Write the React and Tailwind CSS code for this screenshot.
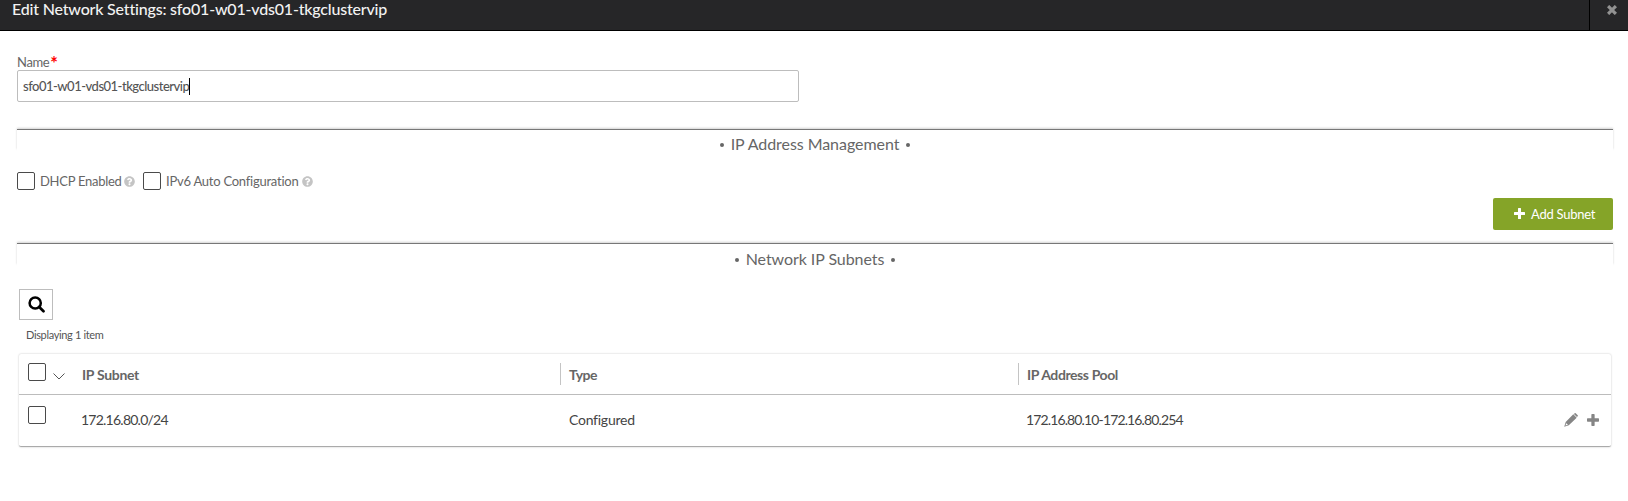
import { FaQuestionCircle } from "react-icons/fa";

function Checkbox({ className = "" }) {
  return <span className={"block size-[18px] shrink-0 rounded-[2px] border border-[#4a4a4a] bg-white " + className} />;
}

function Help({ className = "" }) {
  return <FaQuestionCircle className={"size-[11px] shrink-0 text-[#c4c4c4] " + className} />;
}

function Plus({ className = "" }) {
  return (
    <svg viewBox="0 0 11 11" className={"shrink-0 fill-current " + className}>
      <path d="M4.6 0h1.8a.6.6 0 0 1 .6.6V4h3.4a.6.6 0 0 1 .6.6v1.8a.6.6 0 0 1-.6.6H7v3.4a.6.6 0 0 1-.6.6H4.6a.6.6 0 0 1-.6-.6V7H.6a.6.6 0 0 1-.6-.6V4.6A.6.6 0 0 1 .6 4H4V.6a.6.6 0 0 1 .6-.6z" />
    </svg>
  );
}

function Pencil() {
  return (
    <svg viewBox="0 0 14 14" className="size-[14px] shrink-0 fill-[#858585]">
      <path fillRule="evenodd" d="M9.9 1 10.7.3q.5-.5 1 0l2 2q.5.5 0 1l-.8.8zM9.3 1.3l3.4 3.4-7.9 7.6L.2 13.8l1.5-4.9zM2.3 10.2l-.9 2.4 2.5-.8z" />
    </svg>
  );
}

function SearchIcon() {
  return (
    <svg viewBox="0 0 17 17" className="size-[17px] fill-none stroke-black">
      <circle cx="7.2" cy="7" r="5.6" strokeWidth="2.5" />
      <path d="m11.2 11 4.3 4.3" strokeWidth="2.7" strokeLinecap="round" />
    </svg>
  );
}

function SectionHeading({ children, className = "", textClassName = "" }) {
  return (
    <div className={"border-t border-[#777] shadow-[0_-1px_2px_rgba(0,0,0,0.18)] " + className}>
      <div className={"flex items-center justify-center gap-[7px] bg-white text-[16px] text-[#666] " + textClassName}>
        <span className="mt-[2px] size-[4px] rounded-full bg-[#666]" />
        <span className="tracking-[-0.06px]">{children}</span>
        <span className="mt-[2px] size-[4px] rounded-full bg-[#666]" />
      </div>
    </div>
  );
}

export default function App() {
  return (
    <div className="h-[501px] overflow-hidden bg-white font-['Lato',sans-serif] whitespace-nowrap text-[#666]">
      <header className="flex h-[31px] border-b border-black bg-[#262628]">
        <h1 className="flex-1 pl-[12px] text-[16px] leading-[18px] font-medium tracking-[-0.19px] text-[#f2f2f2]">
          Edit Network Settings: sfo01-w01-vds01-tkgclustervip
        </h1>
        <button className="flex w-[39px] justify-center border-l border-black pt-[5px] pl-[5px]">
          <svg viewBox="0 0 10 10" className="size-[10px] stroke-[#929292]">
            <path d="m2.2 2.2 5.6 5.6M7.8 2.2 2.2 7.8" strokeWidth="3.2" strokeLinecap="square" />
          </svg>
        </button>
      </header>

      <main className="pr-[15px] pl-[17px]">
        <label className="flex h-[39px] items-start pt-[22px] text-[13px] leading-[18px] tracking-[-0.35px]">
          Name
          <span className="ml-[1px] text-[18px] leading-[20px] font-bold text-[#f00]">*</span>
        </label>
        <div className="flex h-[32px] w-[782px] items-center rounded-[2px] border border-[#bdbdbd] pt-px pl-[5px] text-[13px] font-medium tracking-[-0.5px] text-[#555]">
          sfo01-w01-vds01-tkgclustervip
          <span className="-mt-px h-[17px] w-px bg-black" />
        </div>

        <SectionHeading className="mt-[27px] h-[21px]" textClassName="h-[27px]">IP Address Management</SectionHeading>

        <div className="mt-[22px] flex h-[18px] items-center text-[13px] leading-[18px]">
          <Checkbox />
          <span className="ml-[5px] w-[81px] tracking-[-0.27px]">DHCP Enabled</span>
          <Help className="ml-[3px]" />
          <Checkbox className="ml-[8px]" />
          <span className="ml-[5px] w-[134px] tracking-[-0.24px]">IPv6 Auto Configuration</span>
          <Help className="ml-[2px]" />
        </div>

        <div className="mt-[8px] flex justify-end">
          <button className="flex h-[32px] w-[120px] items-center rounded-[2px] bg-[#85a428] pt-px pl-[21px] text-[13px] tracking-[-0.25px] text-white">
            <Plus className="-mt-[3px] mr-[6px] size-[11px]" />
            Add Subnet
          </button>
        </div>

        <SectionHeading className="mt-[13px] h-[22px]" textClassName="h-[29px]">Network IP Subnets</SectionHeading>

        <div className="mt-[24px] pr-[2px] pl-[2px]">
          <button className="flex h-[31px] w-[34px] items-center justify-center border border-[#bdbdbd]">
            <SearchIcon />
          </button>
          <p className="mt-[6px] pl-[7px] text-[11px] leading-[17px] tracking-[-0.35px] text-[#555]">Displaying 1 item</p>

          <div className="mt-[11px] h-[93px] rounded-[2px] border-b border-[#aaa] shadow-[0_0_2px_rgba(0,0,0,0.25)]">
            <div className="grid h-[41px] grid-cols-[541px_458px_1fr] items-center border-b border-[#bcbcbc] text-[14px] font-bold">
              <div className="flex items-center pl-[9px]">
                <Checkbox className="-mt-[4px]" />
                <svg viewBox="0 0 12 7" className="mt-[4px] ml-[7px] h-[7px] w-[12px] fill-none stroke-[#555]">
                  <path d="m.5.5 5.5 5.5 5.5-5.5" />
                </svg>
                <span className="ml-[17px] tracking-[-0.3px]">IP Subnet</span>
              </div>
              <div className="flex h-[22px] items-center border-l border-[#c4c4c4] pl-[8px] tracking-[-0.5px]">Type</div>
              <div className="flex h-[22px] items-center border-l border-[#c4c4c4] pl-[8px] tracking-[-0.4px]">IP Address Pool</div>
            </div>
            <div className="grid h-[51px] grid-cols-[541px_458px_1fr] items-center pb-[2px] text-[14px] text-[#444]">
              <div className="flex items-center pl-[9px]">
                <Checkbox className="-mt-[9px]" />
                <span className="ml-[35px] tracking-[-0.76px]">172.16.80.0/24</span>
              </div>
              <div className="pl-[9px] tracking-[-0.25px]">Configured</div>
              <div className="flex items-center pl-[8px]">
                <span className="flex-1 tracking-[-0.87px]">172.16.80.10-172.16.80.254</span>
                <Pencil />
                <Plus className="mr-[12px] ml-[9px] size-[12px] text-[#858585]" />
              </div>
            </div>
          </div>
        </div>
      </main>
    </div>
  );
}
